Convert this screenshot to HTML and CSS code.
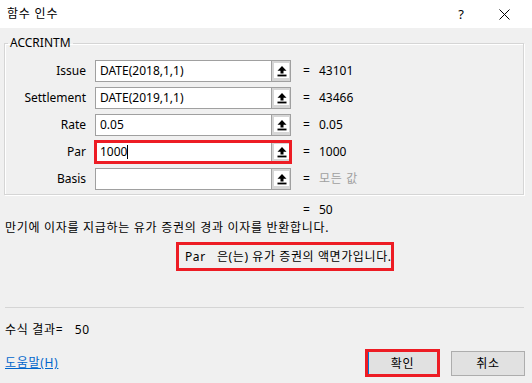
FILE: index.html
```html
<!DOCTYPE html>
<html lang="ko">
<head>
    <meta charset="UTF-8">
    <title>함수 인수</title>
    <link rel="stylesheet" href="styles.css">
</head>
<body>
    <div class="titlebar">
        <span class="title">함수 인수</span>
        <span class="help-btn">?</span>
        <span class="close-btn">
            <svg width="11" height="11" viewBox="0 0 11 11"><path d="M0.5 0.5 L10.5 10.5 M10.5 0.5 L0.5 10.5" stroke="#000" stroke-width="1" fill="none"/></svg>
        </span>
    </div>

    <fieldset class="group">
        <legend>ACCRINTM</legend>
        <div class="args">
            <div class="arg-label">Issue</div>
            <div class="field">
                <div class="textbox">DATE(2018,1,1)</div>
                <div class="ref-btn"><span class="ref-face"><svg width="12" height="12" viewBox="0 0 12 12"><path d="M6 1 L10.5 5.8 H7.5 V8.5 H4.5 V5.8 H1.5 Z" fill="#000"/><rect x="1.5" y="9.6" width="9" height="1.8" fill="#000"/></svg></span></div>
            </div>
            <div class="arg-value"><span class="eq">=</span>43101</div>

            <div class="arg-label">Settlement</div>
            <div class="field">
                <div class="textbox">DATE(2019,1,1)</div>
                <div class="ref-btn"><span class="ref-face"><svg width="12" height="12" viewBox="0 0 12 12"><path d="M6 1 L10.5 5.8 H7.5 V8.5 H4.5 V5.8 H1.5 Z" fill="#000"/><rect x="1.5" y="9.6" width="9" height="1.8" fill="#000"/></svg></span></div>
            </div>
            <div class="arg-value"><span class="eq">=</span>43466</div>

            <div class="arg-label">Rate</div>
            <div class="field">
                <div class="textbox">0.05</div>
                <div class="ref-btn"><span class="ref-face"><svg width="12" height="12" viewBox="0 0 12 12"><path d="M6 1 L10.5 5.8 H7.5 V8.5 H4.5 V5.8 H1.5 Z" fill="#000"/><rect x="1.5" y="9.6" width="9" height="1.8" fill="#000"/></svg></span></div>
            </div>
            <div class="arg-value"><span class="eq">=</span>0.05</div>

            <div class="arg-label">Par</div>
            <div class="field highlight">
                <div class="textbox">1000<span class="caret"></span></div>
                <div class="ref-btn"><span class="ref-face"><svg width="12" height="12" viewBox="0 0 12 12"><path d="M6 1 L10.5 5.8 H7.5 V8.5 H4.5 V5.8 H1.5 Z" fill="#000"/><rect x="1.5" y="9.6" width="9" height="1.8" fill="#000"/></svg></span></div>
            </div>
            <div class="arg-value"><span class="eq">=</span>1000</div>

            <div class="arg-label">Basis</div>
            <div class="field">
                <div class="textbox"></div>
                <div class="ref-btn"><span class="ref-face"><svg width="12" height="12" viewBox="0 0 12 12"><path d="M6 1 L10.5 5.8 H7.5 V8.5 H4.5 V5.8 H1.5 Z" fill="#000"/><rect x="1.5" y="9.6" width="9" height="1.8" fill="#000"/></svg></span></div>
            </div>
            <div class="arg-value"><span class="eq">=</span><span class="muted ko">모든 값</span></div>
        </div>
    </fieldset>

    <div class="result-line"><span class="eq">=</span>50</div>
    <div class="description ko">만기에 이자를 지급하는 유가 증권의 경과 이자를 반환합니다.</div>
    <div class="arg-help ko">Par&nbsp;&nbsp; 은(는) 유가 증권의 액면가입니다.</div>

    <div class="separator"></div>

    <div class="formula-result ko">수식 결과=&nbsp;&nbsp; 50</div>

    <div class="footer">
        <a class="help-link ko" href="#">도움말(H)</a>
        <div class="buttons">
            <button class="btn btn-ok ko">확인</button>
            <button class="btn btn-cancel ko">취소</button>
        </div>
    </div>
</body>
</html>
```

FILE: styles.css
```css
body {
    margin: 0;
    width: 532px;
    height: 383px;
    background-color: #f0f0f0;
    font-family: "Noto Sans", "Noto Sans CJK KR", sans-serif;
    font-size: 12px;
    line-height: 16px;
    color: #000;
    overflow: hidden;
}

/* Korean text runs a little wider than the CJK fallback */
.ko {
    letter-spacing: 0.7px;
}

.titlebar {
    height: 28px;
    background-color: #fff;
    display: flex;
    align-items: center;
    padding-left: 7px;
}

.title {
    flex: 1;
    letter-spacing: 0.8px;
}

.help-btn {
    font-size: 13px;
    margin-right: 35px;
}

.close-btn {
    display: flex;
    margin-right: 22px;
}

/* Group box */
.group {
    margin: 7px 8px 0 4px;
    padding: 9px 0 4px 0;
    border: 1px solid #d5d5d5;
    box-shadow: inset 1px 1px 0 #fff, 1px 1px 0 #fff;
    min-width: 0;
}

.group legend {
    padding: 0 2px;
    margin-left: 3px;
    line-height: 16px;
}

.args {
    display: grid;
    grid-template-columns: 81px 196px 1fr;
    grid-auto-rows: 22px;
    column-gap: 9px;
    row-gap: 5px;
    align-items: center;
}

.arg-label {
    text-align: right;
}

.field {
    display: flex;
    height: 22px;
}

.field.highlight {
    outline: 3px solid #ed1c24;
    outline-offset: -2px;
}

.textbox {
    flex: 1;
    background-color: #fff;
    border: 1px solid #a0a0a0;
    border-right: none;
    padding-left: 4px;
    display: flex;
    align-items: center;
}

.caret {
    display: inline-block;
    width: 1px;
    height: 14px;
    background-color: #000;
}

.ref-btn {
    width: 20px;
    background-color: #d6d6d6;
    border: 1px solid #a0a0a0;
    box-sizing: border-box;
    padding: 2px 0 0 2px;
}

.ref-face {
    display: flex;
    align-items: center;
    justify-content: center;
    width: 15px;
    height: 15px;
    background-color: #fff;
}

.arg-value {
    margin-left: 3px;
}

.eq {
    display: inline-block;
    width: 16px;
}

.muted {
    color: #a0a0a0;
}

/* Below the group */
.result-line {
    margin-top: 7px;
    padding-left: 303px;
}

.description {
    margin-top: 2px;
    padding-left: 5px;
}

.arg-help {
    margin: 6px 0 0 176px;
    width: 218px;
    height: 29px;
    box-sizing: border-box;
    border: 3px solid #ed1c24;
    padding: 4px 0 0 6px;
    letter-spacing: 0.6px;
    white-space: nowrap;
}

.separator {
    margin: 36px 8px 0 5px;
    border-top: 1px solid #d5d5d5;
}

.formula-result {
    margin-top: 14px;
    padding-left: 5px;
}

.footer {
    margin-top: 11px;
    display: flex;
    align-items: center;
    justify-content: space-between;
    padding: 0 7px 0 5px;
}

.help-link {
    color: #0066cc;
    text-decoration: underline;
}

.buttons {
    display: flex;
    align-items: center;
    gap: 11px;
}

.btn {
    font-family: inherit;
    font-size: 12px;
    background-color: #e1e1e1;
    color: #000;
    padding: 0;
    box-sizing: border-box;
}

.btn-ok {
    width: 75px;
    height: 28px;
    border: 3px solid #ed1c24;
    box-shadow: inset 1px 0 0 #0078d7;
}

.btn-cancel {
    width: 74px;
    height: 25px;
    border: 1px solid #adadad;
}
```
